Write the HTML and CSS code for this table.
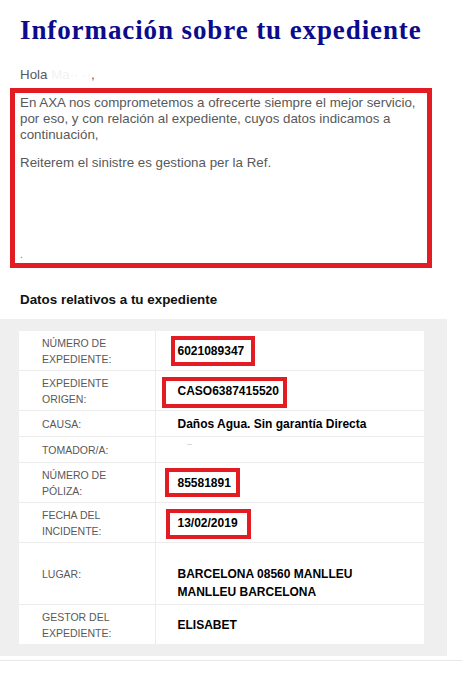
FILE: index.html
```html
<!DOCTYPE html>
<html lang="es">
<head>
<meta charset="utf-8">
<title>Información sobre tu expediente</title>
<link rel="stylesheet" href="styles.css">
</head>
<body>
<h1 class="title">Información sobre tu expediente</h1>
<p class="greeting">Hola <span class="redacted">Ma·· ··</span>,</p>
<div class="notice">
  <p class="notice-text">En AXA nos comprometemos a ofrecerte siempre el mejor servicio, por eso, y con relación al expediente, cuyos datos indicamos a continuación,</p>
  <p class="notice-text">Reiterem el sinistre es gestiona per la Ref.</p>
  <p class="notice-dot">.</p>
</div>
<h2 class="section-title">Datos relativos a tu expediente</h2>
<div class="panel">
  <table class="data">
    <tr>
      <td class="label">Número de<br>expediente:</td>
      <td class="value"><div class="cell"><span class="mark mark-1"></span>6021089347</div></td>
    </tr>
    <tr>
      <td class="label">Expediente<br>origen:</td>
      <td class="value"><div class="cell"><span class="mark mark-2"></span>CASO6387415520</div></td>
    </tr>
    <tr>
      <td class="label">Causa:</td>
      <td class="value">Daños Agua. Sin garantía Directa</td>
    </tr>
    <tr>
      <td class="label">Tomador/A:</td>
      <td class="value"><span class="redacted-dark">&nbsp;&nbsp;&nbsp;‾</span></td>
    </tr>
    <tr>
      <td class="label">Número de<br>póliza:</td>
      <td class="value"><div class="cell"><span class="mark mark-5"></span>85581891</div></td>
    </tr>
    <tr>
      <td class="label">Fecha del<br>incidente:</td>
      <td class="value"><div class="cell"><span class="mark mark-6"></span>13/02/2019</div></td>
    </tr>
    <tr>
      <td class="label">Lugar:</td>
      <td class="value"><span class="redacted-dark">&nbsp;</span><br>BARCELONA 08560 MANLLEU<br>MANLLEU BARCELONA</td>
    </tr>
    <tr>
      <td class="label">Gestor del<br>expediente:</td>
      <td class="value">ELISABET <span class="redacted-dark">&nbsp;</span></td>
    </tr>
  </table>
</div>
<div class="rule"></div>
</body>
</html>
```

FILE: styles.css
```css
html, body {
  margin: 0;
  padding: 0;
  background: #ffffff;
}

body {
  width: 462px;
  font-family: "Liberation Sans", Arial, sans-serif;
  color: #595959;
}

.title {
  margin: 0;
  padding: 14px 0 0 20px;
  font-family: "Liberation Serif", "Times New Roman", serif;
  font-weight: bold;
  font-size: 27px;
  line-height: 32px;
  letter-spacing: 0.9px;
  color: #0b0b8c;
}

.greeting {
  margin: 21px 0 0 20px;
  font-size: 13.33px;
  line-height: 16px;
  color: #595959;
}

.redacted {
  color: #f2f2f2;
}

.notice {
  box-sizing: border-box;
  margin: 5px 0 0 10px;
  width: 422px;
  height: 180px;
  border: 5px solid #e31b23;
  padding: 2px 8px 0 5px;
  display: flex;
  flex-direction: column;
}

.notice-text {
  margin: 0 0 12px;
  font-size: 13.33px;
  line-height: 16px;
  color: #595959;
}

.notice-dot {
  margin: auto 0 0;
  font-size: 10px;
  line-height: 16px;
  color: #777;
}

.section-title {
  margin: 24px 0 0 20px;
  font-size: 13.4px;
  line-height: 16px;
  font-weight: bold;
  color: #111;
}

.panel {
  box-sizing: border-box;
  width: 447px;
  margin-top: 11px;
  padding: 12px 23px 12px 19px;
  background: #efefef;
}

.data {
  width: 405px;
  border-collapse: collapse;
  background: #ffffff;
}

.data td {
  padding: 3.5px 0;
  border-bottom: 1px solid #ececec;
  vertical-align: middle;
}

.data tr:last-child td {
  border-bottom: none;
}

.label {
  box-sizing: border-box;
  width: 136px;
  padding-left: 23px !important;
  border-right: 1px solid #ececec;
  font-size: 10.5px;
  line-height: 16px;
  text-transform: uppercase;
  color: #595959;
}

.value {
  padding-left: 22px !important;
  font-size: 12px;
  line-height: 18px;
  font-weight: bold;
  color: #000;
}

.cell {
  position: relative;
}

.mark {
  position: absolute;
  box-sizing: border-box;
  border: 4px solid #e31b23;
}

.mark-1 { left: -7px; top: -5.5px; width: 84px; height: 30px; }
.mark-2 { left: -16px; top: -5px; width: 125px; height: 31px; }
.mark-5 { left: -13px; top: -5.5px; width: 75px; height: 29px; }
.mark-6 { left: -12px; top: -4.5px; width: 85px; height: 30px; }

.redacted-dark {
  color: #cfcfcf;
  font-weight: normal;
}

.rule {
  margin-top: 4px;
  height: 1px;
  background: #e8e8e8;
}
```
